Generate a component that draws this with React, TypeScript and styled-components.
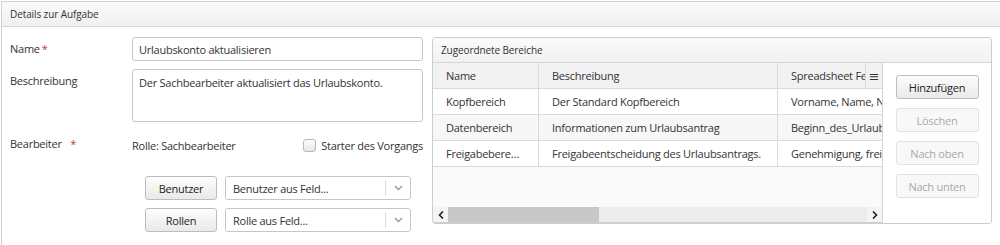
import React from 'react';
import styled, { createGlobalStyle } from 'styled-components';

const GlobalStyle = createGlobalStyle`
  html, body {
    margin: 0;
    padding: 0;
    background: #fff;
    overflow: hidden;
  }
  body {
    font-family: "Open Sans", "DejaVu Sans", sans-serif;
    font-size: 11px;
    letter-spacing: -0.25px;
    color: #333;
  }
`;

interface IArea {
    name: string,
    description: string,
    fields: string,
}

const areas: IArea[] = [
    { name: 'Kopfbereich', description: 'Der Standard Kopfbereich', fields: 'Vorname, Name, Nummer' },
    { name: 'Datenbereich', description: 'Informationen zum Urlaubsantrag', fields: 'Beginn_des_Urlaubs' },
    { name: 'Freigabebereich', description: 'Freigabeentscheidung des Urlaubsantrags.', fields: 'Genehmigung, freigegeben' },
];

const Chevron = () => (
    <svg width="9" height="6" viewBox="0 0 9 6">
        <path d="M1 1l3.5 3.5L8 1" fill="none" stroke="#999" strokeWidth="1.4" />
    </svg>
);

const Arrow = ({ dir }: { dir: 'left' | 'right' }) => (
    <svg width="6" height="8" viewBox="0 0 6 8">
        <path d={dir === 'left' ? 'M5 0.5L1.5 4L5 7.5' : 'M1 0.5L4.5 4L1 7.5'} fill="none" stroke="#222" strokeWidth="1.6" />
    </svg>
);

const SelectBox = ({ value }: { value: string }) => (
    <Select>
        <SelectValue>{value}</SelectValue>
        <SelectToggle><Chevron /></SelectToggle>
    </Select>
);

const App = () => {
    return (
        <>
            <GlobalStyle />
            <Panel>
                <PanelHeader>Details zur Aufgabe</PanelHeader>
                <PanelBody>
                    <Form>
                        <Label>Name<Required>*</Required></Label>
                        <Input defaultValue="Urlaubskonto aktualisieren" />

                        <Label $top={4}>Beschreibung</Label>
                        <TextArea defaultValue="Der Sachbearbeiter aktualisiert das Urlaubskonto." />

                        <Label $top={6}>Bearbeiter <Required $gap={6}>*</Required></Label>
                        <AssigneeRow>
                            <span>Rolle: Sachbearbeiter</span>
                            <CheckLabel>
                                <CheckBox />
                                Starter des Vorgangs
                            </CheckLabel>
                        </AssigneeRow>

                        <span />
                        <Assignments>
                            <AssignRow>
                                <Button>Benutzer</Button>
                                <SelectBox value="Benutzer aus Feld..." />
                            </AssignRow>
                            <AssignRow>
                                <Button>Rollen</Button>
                                <SelectBox value="Rolle aus Feld..." />
                            </AssignRow>
                        </Assignments>
                    </Form>

                    <SubPanel>
                        <SubHeader>Zugeordnete Bereiche</SubHeader>
                        <SubBody>
                            <TableArea>
                                <TableViewport>
                                    <Row $head>
                                        <Cell $ellipsis>Name</Cell>
                                        <Cell>Beschreibung</Cell>
                                        <Cell>Spreadsheet Felder</Cell>
                                    </Row>
                                    {areas.map((a, i) => (
                                        <Row key={a.name} $striped={i % 2 === 1}>
                                            <Cell $ellipsis>{a.name}</Cell>
                                            <Cell>{a.description}</Cell>
                                            <Cell>{a.fields}</Cell>
                                        </Row>
                                    ))}
                                    <ColumnMenu>≡</ColumnMenu>
                                </TableViewport>
                                <ScrollBar>
                                    <ScrollArrow><Arrow dir="left" /></ScrollArrow>
                                    <ScrollTrack>
                                        <ScrollThumb />
                                    </ScrollTrack>
                                    <ScrollArrow><Arrow dir="right" /></ScrollArrow>
                                </ScrollBar>
                            </TableArea>
                            <ActionColumn>
                                <ActionButton>Hinzufügen</ActionButton>
                                <ActionButton disabled>Löschen</ActionButton>
                                <ActionButton disabled>Nach oben</ActionButton>
                                <ActionButton disabled>Nach unten</ActionButton>
                            </ActionColumn>
                        </SubBody>
                    </SubPanel>
                </PanelBody>
            </Panel>
        </>
    );
};

export default App;

const Panel = styled.div`
  margin: 1px 0 0 1px;
  width: 1010px;
  height: 244px;
  border: 1px solid #cfcfcf;
  border-bottom: none;
  box-sizing: border-box;
  overflow: hidden;
`;

const PanelHeader = styled.div`
  height: 24px;
  padding-left: 8px;
  display: flex;
  align-items: center;
  font-size: 10px;
  letter-spacing: -0.1px;
  color: #333;
  background: linear-gradient(#fafafa, #f0f0f0);
  border-bottom: 1px solid #d6d6d6;
`;

const PanelBody = styled.div`
  display: flex;
  align-items: flex-start;
  gap: 9px;
  padding: 10px 0 0 8px;
`;

const Form = styled.div`
  display: grid;
  grid-template-columns: 122px 291px;
  row-gap: 8px;
  align-items: start;
`;

const Label = styled.label<{ $top?: number }>`
  color: #333;
  padding-top: ${p => p.$top ?? 4}px;
`;

const Required = styled.span<{ $gap?: number }>`
  color: #c0392b;
  margin-left: ${p => p.$gap ?? 2}px;
`;

const fieldBase = `
  box-sizing: border-box;
  width: 291px;
  border: 1px solid #c6c6c6;
  border-radius: 3px;
  background: #fff;
  font-family: "Open Sans", "DejaVu Sans", sans-serif;
  font-size: 11px;
  letter-spacing: -0.25px;
  color: #333;
  padding: 0 6px;
  outline: none;
`;

const Input = styled.input`
  ${fieldBase}
  height: 24px;
`;

const TextArea = styled.textarea`
  ${fieldBase}
  height: 53px;
  padding-top: 5px;
  resize: none;
  display: block;
`;

const AssigneeRow = styled.div`
  display: flex;
  justify-content: space-between;
  align-items: center;
  padding-top: 8px;
`;

const CheckLabel = styled.label`
  display: flex;
  align-items: center;
  gap: 5px;
`;

const CheckBox = styled.span`
  width: 11px;
  height: 11px;
  border: 1px solid #b8b8b8;
  border-radius: 3px;
  background: linear-gradient(#fdfdfd, #e6e6e6);
`;

const Assignments = styled.div`
  display: flex;
  flex-direction: column;
  gap: 8px;
  padding: 15px 0 0 13px;
`;

const AssignRow = styled.div`
  display: flex;
  gap: 8px;
`;

const Button = styled.button`
  box-sizing: border-box;
  width: 72px;
  height: 24px;
  border: 1px solid #bdbdbd;
  border-radius: 3px;
  background: linear-gradient(#fdfdfd, #e9e9e9);
  font-family: "Open Sans", "DejaVu Sans", sans-serif;
  font-size: 11px;
  letter-spacing: -0.25px;
  color: #222;
  padding: 0;
`;

const Select = styled.div`
  box-sizing: border-box;
  width: 186px;
  height: 24px;
  display: flex;
  border: 1px solid #c6c6c6;
  border-radius: 3px;
  background: #fff;
`;

const SelectValue = styled.div`
  flex: 1;
  display: flex;
  align-items: center;
  padding-left: 7px;
`;

const SelectToggle = styled.div`
  width: 24px;
  display: flex;
  align-items: center;
  justify-content: center;
  border-left: 1px solid #dcdcdc;
  margin: 3px 0;
`;

const SubPanel = styled.div`
  box-sizing: border-box;
  width: 560px;
  height: 187px;
  border: 1px solid #cdcdcd;
  border-radius: 3px;
  display: flex;
  flex-direction: column;
  overflow: hidden;
`;

const SubHeader = styled.div`
  height: 24px;
  padding-left: 8px;
  display: flex;
  align-items: center;
  font-size: 10px;
  letter-spacing: -0.1px;
  background: linear-gradient(#fbfbfb, #f1f1f1);
  border-bottom: 1px solid #d6d6d6;
`;

const SubBody = styled.div`
  flex: 1;
  display: flex;
`;

const TableArea = styled.div`
  width: 449px;
  display: flex;
  flex-direction: column;
  background: #fafafa;
`;

const TableViewport = styled.div`
  flex: 1;
  position: relative;
  overflow: hidden;
`;

const Row = styled.div<{ $head?: boolean, $striped?: boolean }>`
  display: grid;
  grid-template-columns: 106px 239px 180px;
  width: 525px;
  height: 26px;
  box-sizing: border-box;
  border-bottom: 1px solid #dadada;
  background: ${p => p.$head ? '#f2f2f2' : p.$striped ? '#f7f7f7' : '#fff'};
`;

const Cell = styled.div<{ $ellipsis?: boolean }>`
  min-width: 0;
  line-height: 25px;
  padding: 0 ${p => p.$ellipsis ? 17 : 4}px 0 13px;
  border-right: 1px solid #dadada;
  white-space: nowrap;
  overflow: hidden;
  text-overflow: ${p => p.$ellipsis ? 'ellipsis' : 'clip'};
  color: #333;
`;

const ColumnMenu = styled.div`
  position: absolute;
  top: 0;
  right: 0;
  width: 16px;
  height: 25px;
  display: flex;
  align-items: center;
  justify-content: center;
  background: #f2f2f2;
  border-left: 1px solid #dadada;
  font-size: 13px;
  color: #333;
`;

const ScrollBar = styled.div`
  height: 15px;
  display: flex;
  background: #f0f0f0;
  border-bottom: 1px solid #d0d0d0;
`;

const ScrollArrow = styled.div`
  width: 15px;
  display: flex;
  align-items: center;
  justify-content: center;
  background: #f4f4f4;
`;

const ScrollTrack = styled.div`
  flex: 1;
  background: #ececec;
`;

const ScrollThumb = styled.div`
  width: 151px;
  height: 100%;
  background: #c8c8c8;
`;

const ActionColumn = styled.div`
  flex: 1;
  border-left: 1px solid #d6d6d6;
  background: #fff;
  display: flex;
  flex-direction: column;
  align-items: center;
  gap: 9px;
  padding-top: 12px;
`;

const ActionButton = styled.button`
  box-sizing: border-box;
  width: 83px;
  height: 24px;
  border: 1px solid ${p => p.disabled ? '#e2e2e2' : '#bdbdbd'};
  border-radius: 3px;
  background: ${p => p.disabled ? '#f8f8f8' : 'linear-gradient(#fdfdfd, #e9e9e9)'};
  font-family: "Open Sans", "DejaVu Sans", sans-serif;
  font-size: 11px;
  letter-spacing: -0.25px;
  color: ${p => p.disabled ? '#a8a8a8' : '#222'};
  padding: 0;
`;
